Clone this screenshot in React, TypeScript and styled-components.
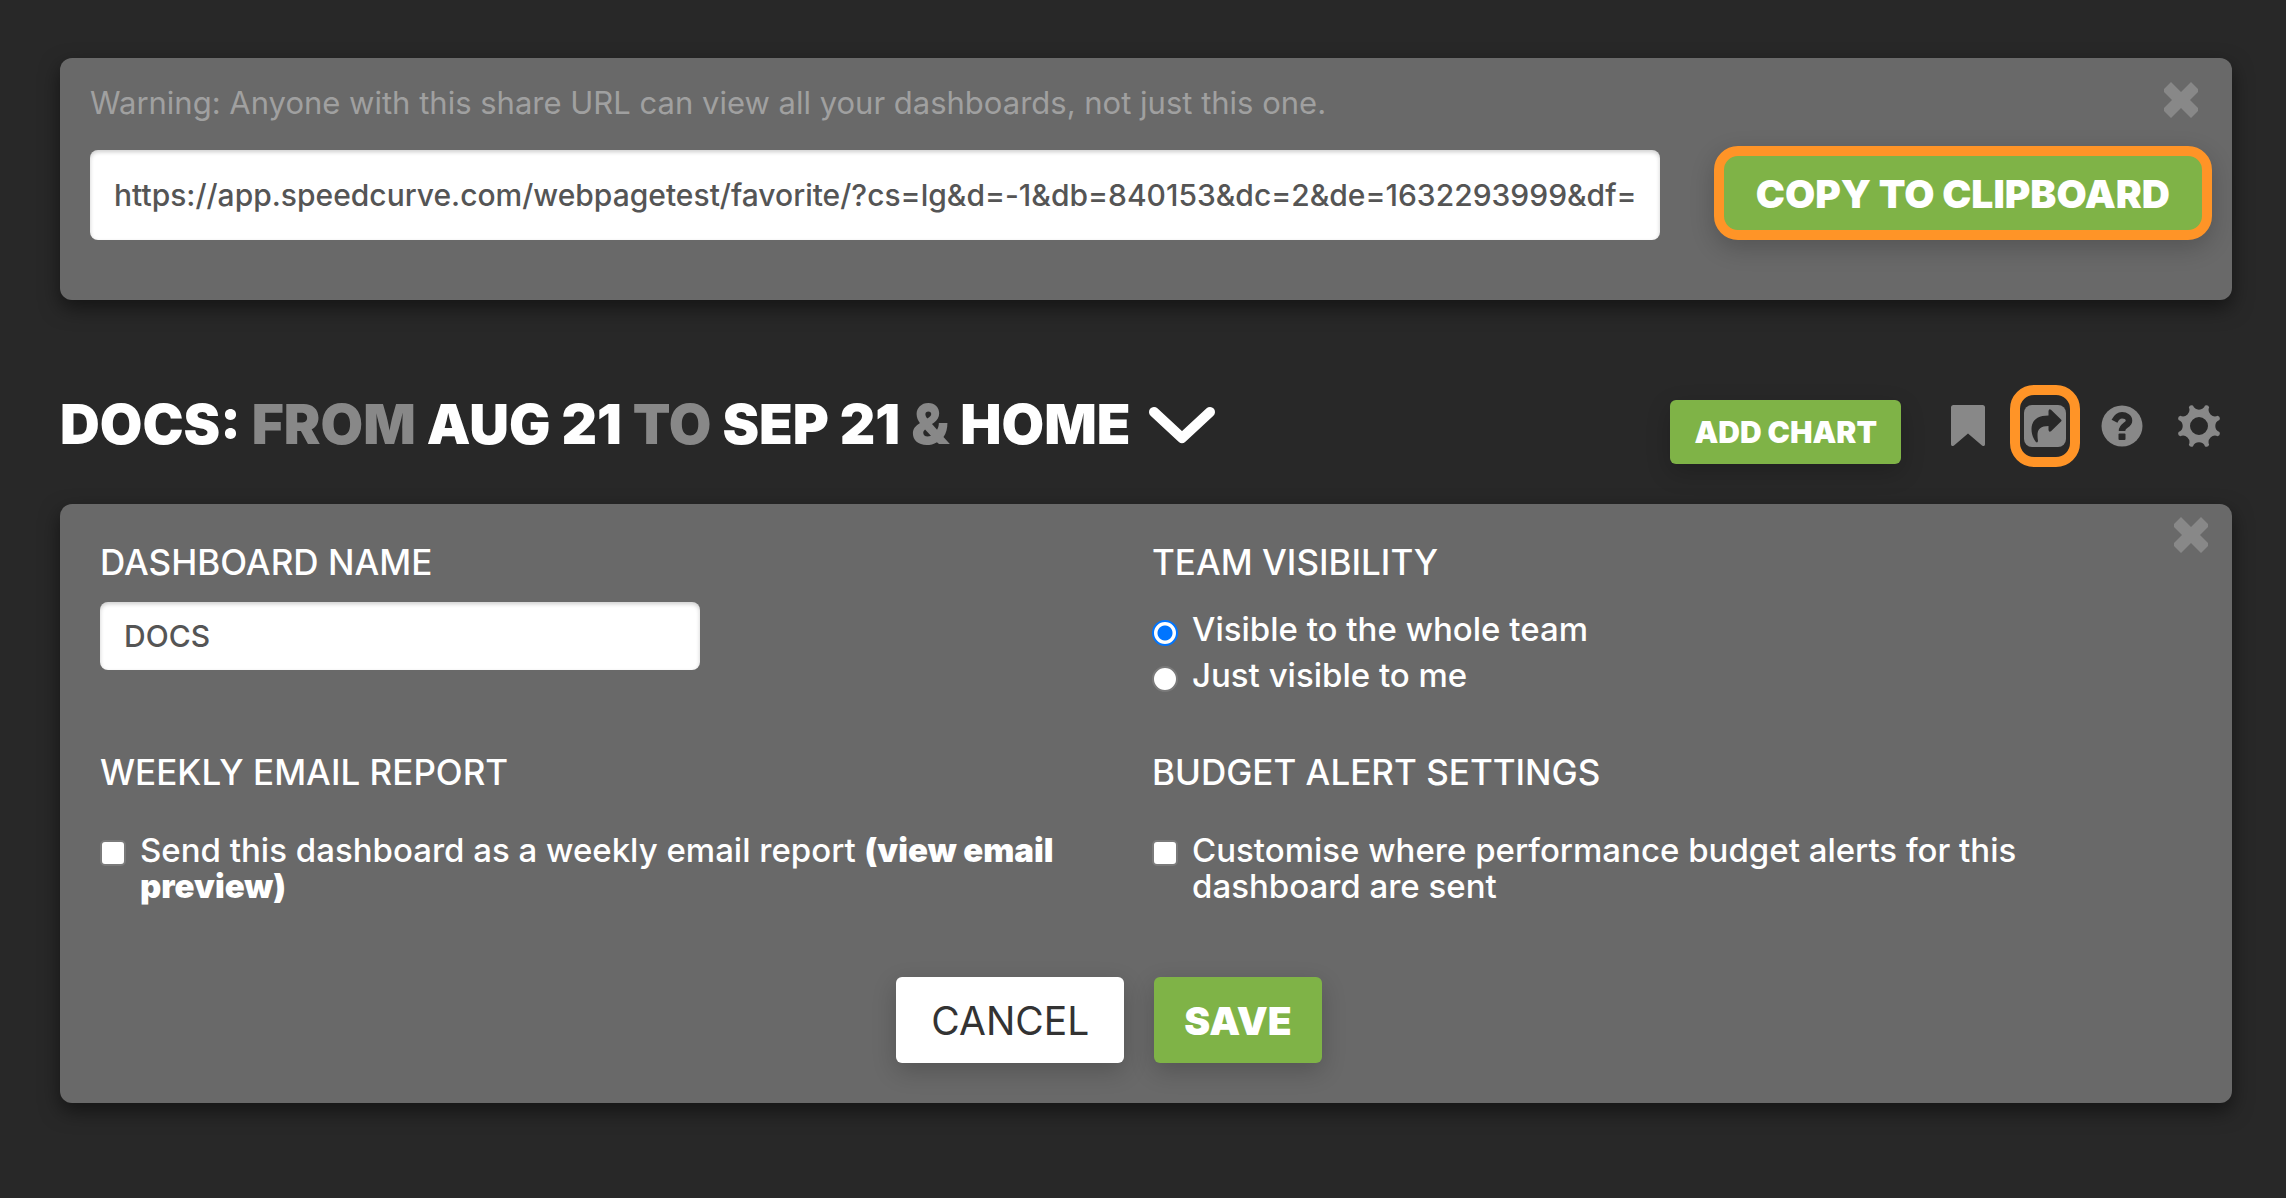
import React, { useState } from 'react';
import styled, { createGlobalStyle, css } from 'styled-components';

const GlobalStyle = createGlobalStyle`
  *, *::before, *::after { box-sizing: border-box; }
  body {
    margin: 0;
    background: #282828;
    color: #fff;
    font-family: Inter, 'Liberation Sans', sans-serif;
    font-weight: 500;
  }
  button, input { font-family: inherit; }
`;

const Page = styled.main`
  padding: 58px 54px 96px 60px;
`;

const panel = css`
  border-radius: 12px;
  background: #696969;
  box-shadow: 0 8px 20px rgba(0, 0, 0, 0.5);
`;

const SharePanel = styled.section`
  ${panel}
  display: flex;
  flex-direction: column;
  gap: 22px;
  padding: 24px 20px 60px 30px;
`;

const ShareHeader = styled.div`
  display: flex;
  justify-content: space-between;
  align-items: flex-start;
  padding-right: 14px;
`;

const Warning = styled.label`
  color: #a0a0a0;
  font-size: 31px;
  font-weight: 400;
  line-height: 42px;
`;

const ShareRow = styled.div`
  display: flex;
  align-items: flex-end;
  gap: 54px;
`;

const TextInput = styled.input<{ $height: number }>`
  flex: 1;
  min-width: 0;
  width: 100%;
  height: ${(p) => p.$height}px;
  padding: 0 24px;
  border: 0;
  border-radius: 8px;
  background: #fff;
  box-shadow: inset 0 2px 4px rgba(0, 0, 0, 0.2);
  color: #555;
  font-size: 30px;
  font-weight: 500;
`;

const Button = styled.button<{ $plain?: boolean }>`
  height: 86px;
  padding: 0 ${(p) => (p.$plain ? 35 : 30)}px;
  border: 0;
  border-radius: 6px;
  background: ${(p) => (p.$plain ? '#fff' : '#7fb347')};
  box-shadow: 0 8px 24px rgba(0, 0, 0, 0.2);
  color: ${(p) => (p.$plain ? '#333' : '#fff')};
  font-size: 39px;
  font-weight: ${(p) => (p.$plain ? 400 : 900)};
  white-space: nowrap;
  cursor: pointer;
`;

const CopyButton = styled(Button)`
  height: 94px;
  padding: 0 32px;
  border: 10px solid #ff9427;
  border-radius: 24px;
`;

const AddButton = styled(Button)`
  height: 64px;
  padding: 0 24px;
  font-size: 30px;
`;

const CloseButton = styled.button`
  display: flex;
  padding: 0;
  border: 0;
  background: none;
  color: #888;
  cursor: pointer;
`;

const PanelClose = styled(CloseButton)`
  position: absolute;
  top: 13px;
  right: 24px;
`;

const Header = styled.header`
  display: flex;
  justify-content: space-between;
  align-items: flex-start;
  margin: 100px 0 40px;
  padding-right: 12px;
`;

const Title = styled.h1`
  display: flex;
  align-items: center;
  gap: 18px;
  margin: 0;
  font-size: 55px;
  font-weight: 900;
  line-height: 48px;
`;

const Muted = styled.span`
  color: #888;
`;

const Toolbar = styled.div`
  display: flex;
  align-items: flex-start;
  gap: 46px;
`;

const IconRow = styled.nav`
  display: flex;
  gap: 35px;
  padding-top: 5px;
`;

const IconButton = styled.button<{ $highlight?: boolean }>`
  position: relative;
  display: flex;
  padding: 0;
  border: 0;
  background: none;
  color: #888;
  cursor: pointer;

  ${(p) =>
    p.$highlight &&
    css`
      &::after {
        content: '';
        position: absolute;
        inset: -20px -14px;
        border: 10px solid #ff9427;
        border-radius: 24px;
      }
    `}
`;

const SettingsPanel = styled.form`
  ${panel}
  position: relative;
  padding: 38px 114px 40px 40px;
`;

const SettingsGrid = styled.div`
  display: grid;
  grid-template-columns: 1fr 1fr;
  gap: 54px 86px;
`;

const Group = styled.fieldset<{ $gap: number }>`
  min-width: 0;
  margin: 0;
  padding: 0;
  border: 0;

  > :first-child {
    display: block;
    margin-bottom: ${(p) => p.$gap}px;
    padding: 0;
    font-size: 35px;
    font-weight: 500;
    line-height: 40px;
  }
`;

const NameField = styled.div`
  display: flex;
  max-width: 600px;
`;

const Option = styled.label<{ $line: number }>`
  display: flex;
  align-items: flex-start;
  gap: 14px;
  font-size: 33px;
  line-height: ${(p) => p.$line}px;
`;

const mark = css`
  appearance: none;
  flex: none;
  width: 26px;
  height: 26px;
  border: 2px solid #7a7a7a;
  background: #fff;
`;

const Radio = styled.input`
  ${mark}
  margin: 14px 0 0;
  border-radius: 50%;

  &:checked {
    border-color: #0075ff;
    background: radial-gradient(circle, #0075ff 7px, #fff 8px);
  }
`;

const Checkbox = styled.input`
  ${mark}
  margin: 8px 0 0;
  border-radius: 5px;

  &:checked {
    background: #0075ff;
  }
`;

const PreviewLink = styled.a`
  color: #fff;
  font-weight: 900;
  text-decoration: none;
`;

const Actions = styled.div`
  display: flex;
  justify-content: center;
  gap: 30px;
  margin-top: 73px;
`;

const CloseIcon = () => (
  <svg width="34" height="36" viewBox="0 0 34 36" fill="currentColor" aria-hidden="true">
    <path d="M7 0 17 10 27 0 34 7V10L26 18 34 26V29L27 36 17 26 7 36 0 29V26L8 18 0 10V7Z" />
  </svg>
);

const ChevronIcon = () => (
  <svg width="66" height="40" viewBox="0 0 66 40" fill="none" aria-hidden="true">
    <path d="M5 8 33 34 61 8" stroke="#fff" strokeWidth="10" strokeLinecap="round" strokeLinejoin="round" />
  </svg>
);

const Icon = ({ children }: { children: React.ReactNode }) => (
  <svg width="42" height="42" viewBox="0 0 42 42" fill="currentColor" aria-hidden="true">
    {children}
  </svg>
);

const BookmarkIcon = () => (
  <Icon>
    <path d="M6.500 0H35.500Q38 0 38 2.500V39.500Q37.500 42 35 40.500L21 28.500 7 40.500Q4.500 42 4 39.500V2.500Q4 0 6.500 0Z" />
  </Icon>
);

const ShareIcon = () => (
  <Icon>
    <rect width="42" height="42" rx="8" />
    <path
      fill="#282828"
      d="M24.500 10.500V6Q25 3.500 27 4.800L37 14.500Q38 15.500 37 16.500L27 26.200Q25 27.500 24.500 25V21C17 21 13.500 24 13.500 30Q13.500 33 14 36Q13.500 38.500 11.500 36.500C8.500 32 7.500 28 7.500 24C7.500 15 14 10.500 24.500 10.500Z"
    />
  </Icon>
);

const HelpIcon = () => (
  <Icon>
    <circle cx="21" cy="21" r="20.500" />
    <path
      fill="none"
      stroke="#282828"
      strokeWidth="6.500"
      strokeLinejoin="round"
      d="M13.500 16.300Q16.500 10.300 21 10.300C25 10.300 28 12.500 28 15.700C28 20.500 21 20 21 26"
    />
    <rect x="17.500" y="28.500" width="7" height="6.500" rx="1" fill="#282828" />
  </Icon>
);

const gearPath = (() => {
  const point = (degrees: number) => {
    const a = (degrees * Math.PI) / 180;
    return `${(21 + 21.3 * Math.cos(a)).toFixed(2)} ${(21 + 21.3 * Math.sin(a)).toFixed(2)}`;
  };
  const teeth = Array.from({ length: 8 }, (_, i) => {
    const a = 22.5 + i * 45;
    return `${i ? 'A6.5 6.5 0 0 0' : 'M'} ${point(a - 6)} A3 3 0 0 1 ${point(a + 6)}`;
  });
  return `${teeth.join(' ')} A6.5 6.5 0 0 0 ${point(16.5)}Z M30 21A9 9 0 1 0 12 21A9 9 0 1 0 30 21Z`;
})();

const GearIcon = () => (
  <Icon>
    <path fillRule="evenodd" d={gearPath} />
  </Icon>
);

export default function App() {
  const [visibility, setVisibility] = useState('team');

  return (
    <>
      <GlobalStyle />
      <Page>
        <SharePanel>
          <ShareHeader>
            <Warning htmlFor="share-url">
              Warning: Anyone with this share URL can view all your dashboards, not just this one.
            </Warning>
            <CloseButton type="button" aria-label="Close">
              <CloseIcon />
            </CloseButton>
          </ShareHeader>
          <ShareRow>
            <TextInput
              id="share-url"
              $height={90}
              readOnly
              value="https://app.speedcurve.com/webpagetest/favorite/?cs=lg&d=-1&db=840153&dc=2&de=1632293999&df="
            />
            <CopyButton type="button">COPY TO CLIPBOARD</CopyButton>
          </ShareRow>
        </SharePanel>

        <Header>
          <Title>
            <span>
              DOCS: <Muted>FROM</Muted> AUG 21 <Muted>TO</Muted> SEP 21 <Muted>&amp;</Muted> HOME
            </span>
            <ChevronIcon />
          </Title>
          <Toolbar>
            <AddButton type="button">ADD CHART</AddButton>
            <IconRow>
              <IconButton type="button" aria-label="Bookmark"><BookmarkIcon /></IconButton>
              <IconButton type="button" aria-label="Share" $highlight><ShareIcon /></IconButton>
              <IconButton type="button" aria-label="Help"><HelpIcon /></IconButton>
              <IconButton type="button" aria-label="Settings"><GearIcon /></IconButton>
            </IconRow>
          </Toolbar>
        </Header>

        <SettingsPanel onSubmit={(e) => e.preventDefault()}>
          <PanelClose type="button" aria-label="Close">
            <CloseIcon />
          </PanelClose>
          <SettingsGrid>
            <Group $gap={20}>
              <label htmlFor="name">DASHBOARD NAME</label>
              <NameField>
                <TextInput id="name" $height={68} defaultValue="DOCS" />
              </NameField>
            </Group>
            <Group $gap={24}>
              <legend>TEAM VISIBILITY</legend>
              <Option $line={46}>
                <Radio
                  type="radio"
                  name="visibility"
                  checked={visibility === 'team'}
                  onChange={() => setVisibility('team')}
                />
                <span>Visible to the whole team</span>
              </Option>
              <Option $line={46}>
                <Radio
                  type="radio"
                  name="visibility"
                  checked={visibility === 'me'}
                  onChange={() => setVisibility('me')}
                />
                <span>Just visible to me</span>
              </Option>
            </Group>
            <Group $gap={40}>
              <legend>WEEKLY EMAIL REPORT</legend>
              <Option $line={36}>
                <Checkbox type="checkbox" />
                <span>
                  Send this dashboard as a weekly email report{' '}
                  <PreviewLink href="#preview">(view email preview)</PreviewLink>
                </span>
              </Option>
            </Group>
            <Group $gap={40}>
              <legend>BUDGET ALERT SETTINGS</legend>
              <Option $line={36}>
                <Checkbox type="checkbox" />
                <span>Customise where performance budget alerts for this dashboard are sent</span>
              </Option>
            </Group>
          </SettingsGrid>
          <Actions>
            <Button type="button" $plain>CANCEL</Button>
            <Button type="submit">SAVE</Button>
          </Actions>
        </SettingsPanel>
      </Page>
    </>
  );
}
